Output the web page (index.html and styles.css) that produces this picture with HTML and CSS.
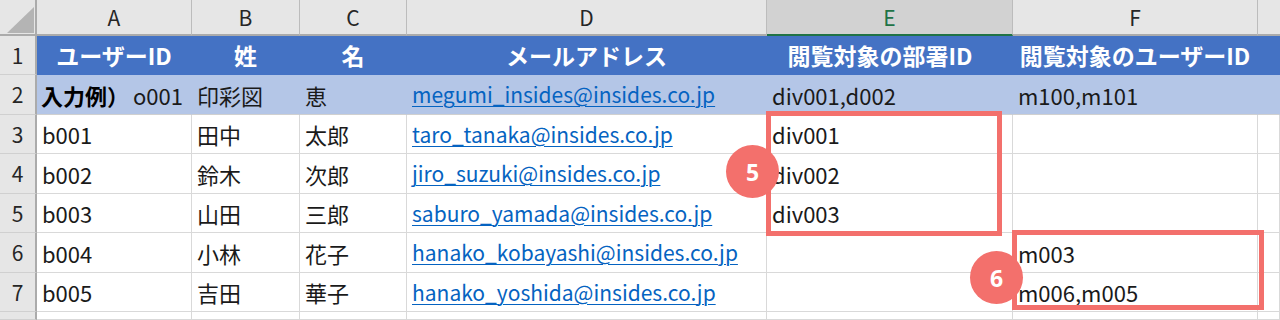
FILE: index.html
```html
<!DOCTYPE html>
<html lang="ja">
<head>
<meta charset="utf-8">
<title>Sheet</title>
<link rel="stylesheet" href="styles.css">
</head>
<body>
<div class="wrap">
  <div class="sheet">
    <div class="c h corner"><span class="tri"></span></div>
    <div class="c h">A</div>
    <div class="c h">B</div>
    <div class="c h">C</div>
    <div class="c h">D</div>
    <div class="c h sel">E</div>
    <div class="c h">F</div>
    <div class="c h last"></div>

    <div class="c rn">1</div>
    <div class="c t1">ユーザーID</div>
    <div class="c t1">姓</div>
    <div class="c t1">名</div>
    <div class="c t1">メールアドレス</div>
    <div class="c t1 e">閲覧対象の部署ID</div>
    <div class="c t1">閲覧対象のユーザーID</div>
    <div class="c t1"></div>

    <div class="c rn">2</div>
    <div class="c t2 tight"><b class="ex">入力例）</b>o001</div>
    <div class="c t2">印彩図</div>
    <div class="c t2">恵</div>
    <div class="c t2"><a class="lnk">megumi_insides@insides.co.jp</a></div>
    <div class="c t2">div001,d002</div>
    <div class="c t2">m100,m101</div>
    <div class="c t2"></div>

    <div class="c rn">3</div>
    <div class="c">b001</div>
    <div class="c">田中</div>
    <div class="c">太郎</div>
    <div class="c"><a class="lnk">taro_tanaka@insides.co.jp</a></div>
    <div class="c">div001</div>
    <div class="c"></div>
    <div class="c"></div>

    <div class="c rn">4</div>
    <div class="c">b002</div>
    <div class="c">鈴木</div>
    <div class="c">次郎</div>
    <div class="c"><a class="lnk">jiro_suzuki@insides.co.jp</a></div>
    <div class="c">div002</div>
    <div class="c"></div>
    <div class="c"></div>

    <div class="c rn">5</div>
    <div class="c">b003</div>
    <div class="c">山田</div>
    <div class="c">三郎</div>
    <div class="c"><a class="lnk">saburo_yamada@insides.co.jp</a></div>
    <div class="c">div003</div>
    <div class="c"></div>
    <div class="c"></div>

    <div class="c rn">6</div>
    <div class="c">b004</div>
    <div class="c">小林</div>
    <div class="c">花子</div>
    <div class="c"><a class="lnk">hanako_kobayashi@insides.co.jp</a></div>
    <div class="c"></div>
    <div class="c">m003</div>
    <div class="c"></div>

    <div class="c rn">7</div>
    <div class="c">b005</div>
    <div class="c">吉田</div>
    <div class="c">華子</div>
    <div class="c"><a class="lnk">hanako_yoshida@insides.co.jp</a></div>
    <div class="c"></div>
    <div class="c">m006,m005</div>
    <div class="c"></div>

    <div class="c rn"></div>
    <div class="c"></div>
    <div class="c"></div>
    <div class="c"></div>
    <div class="c"></div>
    <div class="c"></div>
    <div class="c"></div>
    <div class="c"></div>
  </div>

  <div class="box box5"></div>
  <div class="box box6"></div>
  <div class="badge badge5">5</div>
  <div class="badge badge6">6</div>
</div>
</body>
</html>
```

FILE: styles.css
```css
html, body {
  margin: 0;
  padding: 0;
  background: #ffffff;
  overflow: hidden;
}

.wrap {
  position: relative;
  width: 1280px;
  height: 320px;
  overflow: hidden;
}

.sheet {
  display: grid;
  grid-template-columns: 37px 155px 108px 107px 360px 246px 245px 22px;
  grid-template-rows: 36px 39px 40px 39px 40px 39px 40px 39px 8px;
  font-family: "Noto Sans CJK JP", "Noto Sans", sans-serif;
  font-size: 22px;
  color: #1a1a1a;
}

.c {
  box-sizing: border-box;
  display: flex;
  align-items: center;
  padding: 0 5px;
  white-space: nowrap;
  border-right: 1px solid #d9d9d9;
  border-bottom: 1px solid #d9d9d9;
  min-width: 0;
  line-height: 1;
}

/* column header */
.h {
  background: #e6e6e6;
  justify-content: center;
  color: #262626;
  font-size: 21px;
  border-right: 1px solid #bcbcbc;
  border-bottom: 2px solid #ababab;
}

.h.sel {
  background: #d2d2d2;
  color: #217346;
  border-bottom: 2px solid #217346;
}

.h.last {
  border-right: none;
}

.corner {
  position: relative;
  border-right: 2px solid #ababab;
}

.tri {
  position: absolute;
  left: 7px;
  top: 7px;
  width: 27px;
  height: 26px;
  background: #b4b4b4;
  clip-path: polygon(100% 0, 100% 100%, 0 100%);
}

/* row numbers */
.rn {
  background: #e6e6e6;
  justify-content: center;
  color: #262626;
  font-size: 21px;
  border-right: 2px solid #ababab;
  border-bottom: 1px solid #d0d0d0;
}

/* title row */
.t1 {
  background: #4472c4;
  color: #ffffff;
  font-weight: 700;
  font-size: 23px;
  justify-content: center;
  border-right-color: #4472c4;
  border-bottom-color: #4472c4;
  overflow: visible;
}

.t1.e {
  padding-right: 24px;
}

/* example row */
.t2 {
  background: #b4c6e7;
  border-right-color: #b4c6e7;
  border-bottom-color: #d0d0d0;
}

.tight {
  padding-left: 4px;
}

.ex {
  font-weight: 700;
  color: #000000;
  margin-right: 4px;
}

.lnk {
  color: #0563c1;
  font-size: 21px;
  text-decoration: underline;
  text-decoration-thickness: 1px;
  text-underline-offset: 3px;
}

/* annotations */
.box {
  position: absolute;
  box-sizing: border-box;
  border: 5px solid #f3706c;
}

.box5 {
  left: 766px;
  top: 111px;
  width: 236px;
  height: 125px;
}

.box6 {
  left: 1012px;
  top: 230px;
  width: 252px;
  height: 80px;
}

.badge {
  position: absolute;
  width: 53px;
  height: 53px;
  border-radius: 50%;
  background: #f3706c;
  color: #ffffff;
  font-family: "Noto Sans", "Liberation Sans", sans-serif;
  font-weight: 700;
  font-size: 23px;
  display: flex;
  align-items: center;
  justify-content: center;
}

.badge5 {
  left: 726px;
  top: 145px;
}

.badge6 {
  left: 970px;
  top: 251px;
}
```
